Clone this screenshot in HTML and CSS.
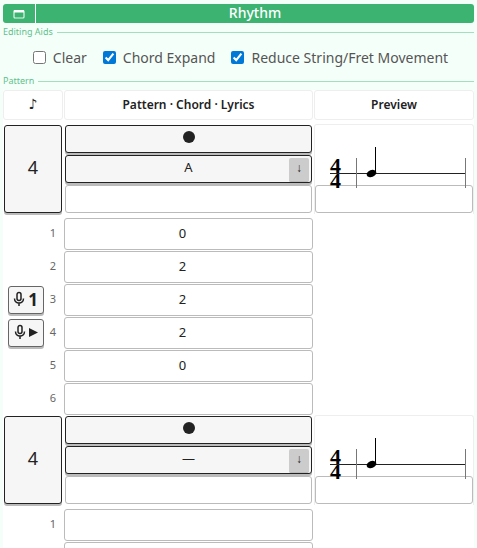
FILE: index.html
```
<!DOCTYPE html>
<html lang="en">

<head>
    <meta charset="UTF-8">
    <meta name="viewport" content="width=device-width, initial-scale=1.0">
    <title>Rhythm</title>
    <link rel="stylesheet" href="styles.css">
</head>

<body>
    <header class="titlebar">
        <button class="window-button" aria-label="Window">
            <svg width="12" height="10" viewBox="0 0 12 10"><rect x="1" y="1.500" width="10" height="7.500" rx="1" fill="none" stroke="#e4f6ec" stroke-width="1.200"/><path d="M1 1h10v2.500H1z" fill="#fff"/></svg>
        </button>
        <h1>Rhythm</h1>
    </header>

    <fieldset>
        <legend>Editing Aids</legend>
        <div class="aids">
            <label><input type="checkbox">Clear</label>
            <label><input type="checkbox" checked>Chord Expand</label>
            <label><input type="checkbox" checked>Reduce String/Fret Movement</label>
        </div>
    </fieldset>

    <fieldset>
        <legend>Pattern</legend>
        <table class="pattern">
            <thead>
                <tr>
                    <th class="note">♪</th>
                    <th>Pattern · Chord · Lyrics</th>
                    <th>Preview</th>
                </tr>
            </thead>
            <tbody>
                <tr class="beat">
                    <td><button class="key length">4</button></td>
                    <td class="stack">
                        <button class="key dot" aria-label="Hit"><svg width="12" height="12" viewBox="0 0 12 12"><circle cx="6" cy="6" r="6" fill="#222"/></svg></button>
                        <div class="chord">
                            <button class="key">A</button>
                            <button class="copy-down" aria-label="Copy down">↓</button>
                        </div>
                        <input type="text" aria-label="Lyrics">
                    </td>
                    <td class="preview">
                        <svg class="staff" width="142" height="52" viewBox="0 0 142 52">
                            <path d="M2 28.500h136" stroke="#222"/>
                            <path d="M28.500 13v30M137.500 13v30" stroke="#777"/>
                            <text x="2" y="28">4</text>
                            <text x="2" y="43">4</text>
                            <ellipse cx="43.500" cy="28.500" rx="5" ry="3.500" transform="rotate(-20 43.500 28.500)"/>
                            <path d="M47.500 2v26" stroke="#000"/>
                        </svg>
                        <input type="text" aria-label="Preview lyrics">
                    </td>
                </tr>
                <tr>
                    <td class="string">1</td>
                    <td><input type="text" class="fret" value="0" aria-label="String 1"></td>
                </tr>
                <tr>
                    <td class="string">2</td>
                    <td><input type="text" class="fret" value="2" aria-label="String 2"></td>
                </tr>
                <tr>
                    <td class="string">
                        <button class="key mic" aria-label="Record one"><svg width="12" height="16" viewBox="0 0 12 16"><path d="M6 1.500a2 2 0 0 1 2 2v4a2 2 0 0 1-4 0v-4a2 2 0 0 1 2-2zM1.500 7.500c0 6 9 6 9 0M6 12v3" fill="none" stroke="#222" stroke-width="1.500"/></svg><b>1</b></button>3
                    </td>
                    <td><input type="text" class="fret" value="2" aria-label="String 3"></td>
                </tr>
                <tr>
                    <td class="string">
                        <button class="key mic" aria-label="Record and play"><svg width="12" height="16" viewBox="0 0 12 16"><path d="M6 1.500a2 2 0 0 1 2 2v4a2 2 0 0 1-4 0v-4a2 2 0 0 1 2-2zM1.500 7.500c0 6 9 6 9 0M6 12v3" fill="none" stroke="#222" stroke-width="1.500"/></svg><svg width="9" height="9" viewBox="0 0 9 9"><path d="M0 0l9 4.500-9 4.500z" fill="#222"/></svg></button>4
                    </td>
                    <td><input type="text" class="fret" value="2" aria-label="String 4"></td>
                </tr>
                <tr>
                    <td class="string">5</td>
                    <td><input type="text" class="fret" value="0" aria-label="String 5"></td>
                </tr>
                <tr>
                    <td class="string">6</td>
                    <td><input type="text" class="fret" aria-label="String 6"></td>
                </tr>
            </tbody>
            <tbody>
                <tr class="beat">
                    <td><button class="key length">4</button></td>
                    <td class="stack">
                        <button class="key dot" aria-label="Hit"><svg width="12" height="12" viewBox="0 0 12 12"><circle cx="6" cy="6" r="6" fill="#222"/></svg></button>
                        <div class="chord">
                            <button class="key">—</button>
                            <button class="copy-down" aria-label="Copy down">↓</button>
                        </div>
                        <input type="text" aria-label="Lyrics">
                    </td>
                    <td class="preview">
                        <svg class="staff" width="142" height="52" viewBox="0 0 142 52">
                            <path d="M2 28.500h136" stroke="#222"/>
                            <path d="M28.500 13v30M137.500 13v30" stroke="#777"/>
                            <text x="2" y="28">4</text>
                            <text x="2" y="43">4</text>
                            <ellipse cx="43.500" cy="28.500" rx="5" ry="3.500" transform="rotate(-20 43.500 28.500)"/>
                            <path d="M47.500 2v26" stroke="#000"/>
                        </svg>
                        <input type="text" aria-label="Preview lyrics">
                    </td>
                </tr>
                <tr>
                    <td class="string">1</td>
                    <td><input type="text" class="fret" aria-label="String 1"></td>
                </tr>
                <tr>
                    <td></td>
                    <td><input type="text" class="fret" aria-label="String 2"></td>
                </tr>
            </tbody>
        </table>
    </fieldset>
</body>

</html>
```
FILE: styles.css
```
:root {
    --green: #3cb371;
    --line: #a3dfbf;
    --ink: #222;
    --key: #f6f6f6;
    --border: #bbb;
    --cell-border: #eee;
}

* {
    box-sizing: border-box;
}

body {
    margin: 0;
    padding: 4px 3px 0;
    height: 100vh;
    overflow: hidden;
    background-color: mintcream;
    color: var(--ink);
    font-family: "Noto Sans", sans-serif;
}

button,
input {
    font-family: inherit;
    color: inherit;
    margin: 0;
}

button {
    cursor: pointer;
}

/* title */
.titlebar {
    display: flex;
    height: 19px;
    margin-bottom: 3px;
    border-radius: 3px;
    overflow: hidden;
    background-color: var(--green);
    color: #fff;
}

.window-button {
    display: flex;
    align-items: center;
    justify-content: center;
    width: 33px;
    padding: 0;
    border: 0;
    border-right: 1px solid #fff;
    background: none;
}

h1 {
    flex: 1;
    margin: 0;
    font-size: 14px;
    line-height: 18px;
    font-weight: 500;
    text-align: center;
}

/* groups */
fieldset {
    margin: 0;
    padding: 0;
    min-width: 0;
    border: 0;
    border-top: 1px solid var(--line);
}

legend {
    padding: 0 4px 0 0;
    font-size: 9px;
    line-height: 12px;
    color: #5fbf8b;
}

.aids {
    display: flex;
    align-items: center;
    justify-content: center;
    gap: 16px;
    height: 38px;
    padding-left: 4px;
    margin-bottom: -1px;
    font-size: 14px;
    color: #555;
    white-space: nowrap;
}

.aids label {
    display: flex;
    align-items: center;
    gap: 7px;
}

.aids input {
    width: 13px;
    height: 13px;
    margin: 0;
    accent-color: #0078d7;
}

/* pattern table */
.pattern,
.pattern thead,
.pattern tbody {
    display: block;
}

.pattern {
    margin-top: 3px;
    background-color: #fff;
}

.pattern tr {
    display: grid;
    grid-template-columns: 60px 249fr 160fr;
    column-gap: 1px;
    margin-bottom: 1px;
}

.pattern thead tr {
    margin-bottom: 4px;
}

.pattern tbody tr:last-child {
    margin-bottom: 0;
}

.pattern td {
    padding: 0;
}

.pattern th {
    height: 30px;
    padding: 0;
    border: 1px solid var(--cell-border);
    border-radius: 3px;
    font-size: 12px;
    line-height: 27px;
    font-weight: 600;
}

.pattern .note {
    font-family: "DejaVu Sans", sans-serif;
    font-size: 14px;
    font-weight: bold;
}

.pattern .beat {
    height: 90px;
    margin-bottom: 4px;
}

.pattern .beat td {
    padding: 1px;
}

.key {
    display: flex;
    align-items: center;
    justify-content: center;
    width: 100%;
    height: 28px;
    padding: 0 0 4px;
    border: 1px solid var(--ink);
    border-radius: 3px;
    background-color: var(--key);
    box-shadow: 0 2px 0 var(--border);
    font-size: 13px;
}

.length {
    height: 88px;
    font-size: 18px;
}

.stack {
    display: flex;
    flex-direction: column;
    gap: 2px;
}

.chord {
    position: relative;
}

.copy-down {
    position: absolute;
    right: 3px;
    top: 3px;
    width: 20px;
    height: 24px;
    padding: 0 0 4px;
    border: 0;
    border-bottom: 1px solid var(--border);
    border-radius: 2px;
    background-color: #ccc;
    font-size: 12px;
}

input[type="text"] {
    display: block;
    width: 100%;
    height: 28px;
    padding: 0;
    border: 1px solid var(--border);
    border-radius: 3px;
    background: none;
    font-size: 13px;
    text-align: center;
}

input.fret {
    height: 32px;
    padding: 0 12px 2px 0;
}

.preview {
    position: relative;
    display: flex;
    align-items: flex-end;
    border: 1px solid var(--cell-border);
    border-bottom: 0;
    border-radius: 3px 3px 0 0;
}

.pattern .beat .preview {
    padding: 0 0 1px;
}

/* the staff hangs over the lyrics box */
.staff {
    position: absolute;
    left: 13px;
    top: 20px;
    pointer-events: none;
}

.staff text {
    font-family: "Liberation Serif", serif;
    font-size: 22px;
    font-weight: bold;
}

.string {
    display: flex;
    align-items: center;
    justify-content: flex-end;
    gap: 6px;
    height: 32px;
    font-size: 11px;
    color: #666;
}

.pattern .string {
    padding: 0 7px 4px 0;
}

.mic {
    gap: 3px;
    width: 36px;
    margin-top: 4px;
    border-color: #666;
    padding-bottom: 2px;
    color: var(--ink);
    font-size: 17px;
}
```
